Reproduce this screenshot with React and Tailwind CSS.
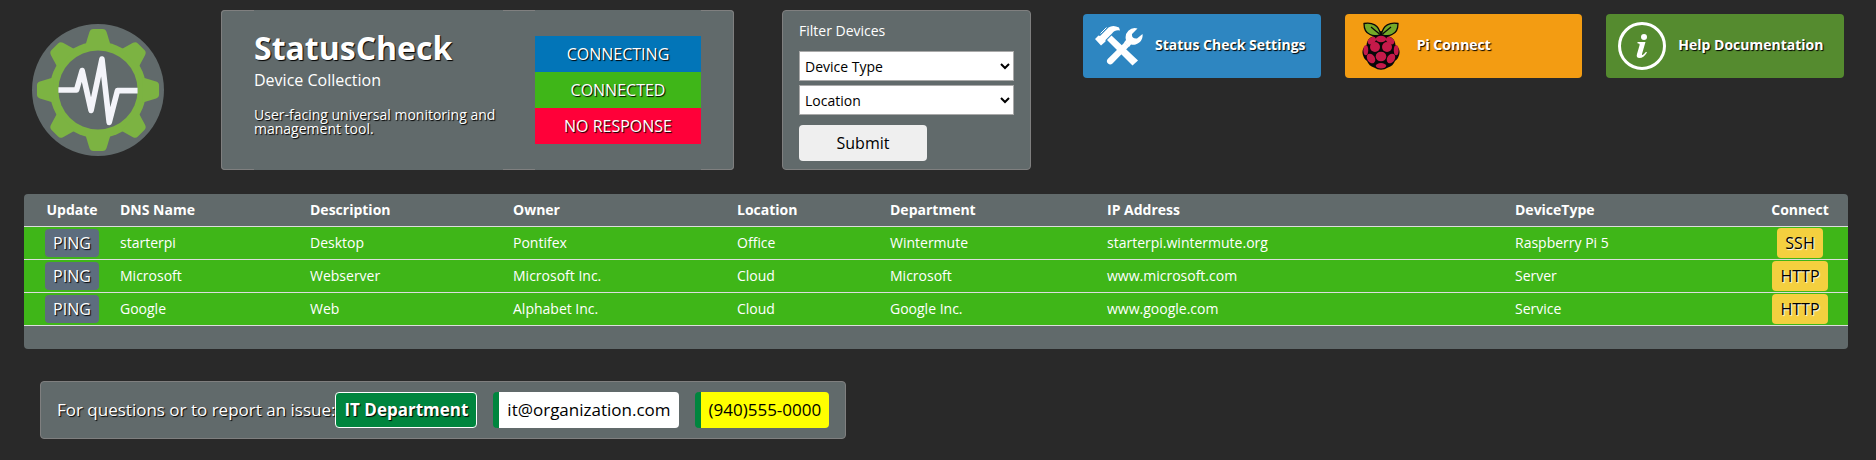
const devices = [
  { dns: 'starterpi', desc: 'Desktop', owner: 'Pontifex', loc: 'Office', dept: 'Wintermute', ip: 'starterpi.wintermute.org', type: 'Raspberry Pi 5', connect: 'SSH' },
  { dns: 'Microsoft', desc: 'Webserver', owner: 'Microsoft Inc.', loc: 'Cloud', dept: 'Microsoft', ip: 'www.microsoft.com', type: 'Server', connect: 'HTTP' },
  { dns: 'Google', desc: 'Web', owner: 'Alphabet Inc.', loc: 'Cloud', dept: 'Google Inc.', ip: 'www.google.com', type: 'Service', connect: 'HTTP' },
];

const toothAngles = [0, 45, 90, 135, 180, 225, 270, 315];

function Logo() {
  return (
    <svg viewBox="0 0 200 200" className="size-[132px] shrink-0" role="img" aria-label="StatusCheck logo">
      <circle cx="100" cy="100" r="100" fill="#616a6b" />
      <g fill="#7cb342">
        <circle cx="100" cy="100" r="73" />
        {toothAngles.map((angle) => (
          <path
            key={angle}
            transform={`rotate(${angle} 100 100)`}
            d="M81 32 L87 12 Q88.500 7.500 93 7.500 H107 Q111.500 7.500 113 12 L119 32 Z"
          />
        ))}
      </g>
      <circle cx="100" cy="100" r="60" fill="#616a6b" />
      <path
        d="M40 100 H67.500 L76 70.500 L89.500 131 L106 53 L117 149 L129.500 101 H160"
        fill="none"
        stroke="#f3f4f9"
        strokeWidth="8.500"
        strokeLinejoin="round"
      />
    </svg>
  );
}

function ToolsIcon() {
  return (
    <svg viewBox="0 0 48 48" className="size-12 shrink-0" fill="#fff" aria-hidden="true">
      <path d="M0 17 L3.500 13.500 L5 14 L13.500 5.500 Q18 2.500 24 5.500 L25 8.500 Q20 7.500 17 11.500 L15 13.500 L10.500 18 L10.500 19.500 L6 23.500 Z" />
      <path d="M5.500 11.500 L11.500 5.500" stroke="#fff" strokeWidth="1" />
      <path d="M12 18 L16.500 13.500 L43 38.500 L37.500 43.500 Z" />
      <path d="M29.500 20.500 L34 24.500 L17.500 41.500 A3.300 3.300 0 0 1 12.700 37 Z" />
      <path d="M42.500 6.500 A9.300 9.300 0 0 0 31 18 L29 20.500 L34 25 L36 22.500 A9.300 9.300 0 0 0 47.500 12 L42 16.500 Q36.500 17 37 12 Z" />
    </svg>
  );
}

function RaspberryIcon() {
  return (
    <svg viewBox="0 0 48 48" className="size-12 shrink-0" aria-hidden="true">
      <path
        d="M24 9 Q29 10 31 14 Q38 16 38.500 23 Q43 26 42.500 31 Q42 36 38 39 Q36 44 31 45.500 Q24 50 17 45.500 Q12 44 10 39 Q6 36 5.500 31 Q5 26 9.500 23 Q10 16 17 14 Q19 10 24 9 Z"
        fill="#080808"
      />
      <g fill="#75a928" stroke="#080808" strokeWidth="1.300" strokeLinejoin="round">
        <path d="M23.500 12.500 C22 3 15 0 7 1.500 C7 7 9 11 13 12.500 Q17 15 23.500 12.500 Z" />
        <path d="M24.500 12.500 C26 3 33 0 41 1.500 C41 7 39 11 35 12.500 Q31 15 24.500 12.500 Z" />
        <path d="M14 5 L22.500 12 M34 5 L25.500 12" fill="none" />
      </g>
      <g fill="#c51a4a">
        <ellipse cx="24" cy="17" rx="5.200" ry="3.200" />
        <ellipse cx="14.800" cy="18.600" rx="4.600" ry="3" transform="rotate(-35 14.800 18.600)" />
        <ellipse cx="33.200" cy="18.600" rx="4.600" ry="3" transform="rotate(35 33.200 18.600)" />
        <ellipse cx="18" cy="25" rx="5" ry="5" />
        <ellipse cx="30" cy="25" rx="5" ry="5" />
        <ellipse cx="8.800" cy="28.300" rx="2.400" ry="5" />
        <ellipse cx="39.200" cy="28.300" rx="2.400" ry="5" />
        <ellipse cx="24" cy="34.500" rx="5.300" ry="4.800" />
        <ellipse cx="14" cy="36.500" rx="3.800" ry="5.200" transform="rotate(-32 14 36.500)" />
        <ellipse cx="34" cy="36.500" rx="3.800" ry="5.200" transform="rotate(32 34 36.500)" />
        <ellipse cx="24" cy="43.800" rx="5.200" ry="2.700" />
      </g>
    </svg>
  );
}

function InfoIcon() {
  return (
    <svg viewBox="0 0 48 48" className="size-12 shrink-0" aria-hidden="true">
      <circle cx="24" cy="24" r="22.500" fill="none" stroke="#fff" strokeWidth="3" />
      <circle cx="26" cy="15" r="3" fill="#fff" />
      <path
        d="M19.500 20 H27.500 L24 32 Q23.700 33.500 25 32.800 Q26.500 31.800 28 29.800 L29 30.500 Q25.500 36 21.500 36 Q17.800 36 19 32 L21.700 22.800 Q22 21.300 19.500 21.300 Z"
        fill="#fff"
      />
    </svg>
  );
}

const shadowDark = '[text-shadow:1px_1px_1px_#000]';

const links = [
  { label: 'Status Check Settings', Icon: ToolsIcon, bg: 'bg-[#2e86c1]' },
  { label: 'Pi Connect', Icon: RaspberryIcon, bg: 'bg-[#f39c12]' },
  { label: 'Help Documentation', Icon: InfoIcon, bg: 'bg-[#558b2f]' },
];

const headings = [
  ['DNS Name', 'w-[190px]'],
  ['Description', 'w-[203px]'],
  ['Owner', 'w-[224px]'],
  ['Location', 'w-[153px]'],
  ['Department', 'w-[217px]'],
  ['IP Address', ''],
  ['DeviceType', 'w-[237px]'],
];

export default function App() {
  return (
    <div className="min-h-screen bg-[#292929] pt-[10px] pb-5 font-['Open_Sans','Noto_Sans',sans-serif] text-white">
      <header className="flex items-start pr-8 pl-8">
        <div className="flex h-40 items-center">
          <Logo />
        </div>

        <section className="ml-[57px] flex h-40 w-[513px] gap-8 rounded bg-[#616a6b] px-[33px] shadow-[inset_0_0_0_1px_#7f7f7f]">
          <div className="h-full flex-1 bg-[#616a6b] pt-[18px]">
            <h1 className={`text-[32px] leading-10 font-bold ${shadowDark}`}>StatusCheck</h1>
            <h2 className="text-base leading-6">Device Collection</h2>
            <p className={`mt-4 text-sm leading-[14px] ${shadowDark}`}>
              User-facing universal monitoring and management tool.
            </p>
          </div>
          <ul className={`flex h-full w-[166px] flex-col justify-center bg-[#616a6b] text-center text-base leading-9 ${shadowDark}`}>
            <li className="bg-[#0275b8]">CONNECTING</li>
            <li className="bg-[#3fb618]">CONNECTED</li>
            <li className="bg-[#ff0039]">NO RESPONSE</li>
          </ul>
        </section>

        <form className="ml-12 flex h-40 w-[249px] flex-col rounded border border-[#7f7f7f] bg-[#616a6b] px-4 pt-[10px] text-sm" onSubmit={(e) => e.preventDefault()}>
          <p className="mb-[10px] leading-5">Filter Devices</p>
          <select aria-label="Device Type" className="mb-1 h-[30px] border border-[#a9a9a9] bg-white px-px text-black">
            <option>Device Type</option>
          </select>
          <select aria-label="Location" className="mb-[10px] h-[30px] border border-[#a9a9a9] bg-white px-px text-black">
            <option>Location</option>
          </select>
          <button type="submit" className="h-9 w-32 rounded bg-[#efefef] text-base text-black">Submit</button>
        </form>

        <nav className="mt-1 ml-[52px] grid flex-1 grid-cols-3 gap-6">
          {links.map(({ label, Icon, bg }) => (
            <a key={label} href="#" className={`flex h-16 items-center gap-3 rounded px-3 text-sm font-bold ${bg} ${shadowDark}`}>
              <Icon />
              <span className="pb-0.5">{label}</span>
            </a>
          ))}
        </nav>
      </header>

      <main className="mt-6 mr-7 ml-6 rounded bg-[#616a6b] pb-[23px]">
        <table className="w-full table-fixed border-separate border-spacing-0 text-left text-sm leading-5">
          <thead>
            <tr className="h-[33px] *:border-b *:border-[#ddd] *:p-0 *:font-bold">
              <th className="w-24 text-center">Update</th>
              {headings.map(([name, width]) => (
                <th key={name} className={width}>{name}</th>
              ))}
              <th className="w-24 text-center">Connect</th>
            </tr>
          </thead>
          <tbody>
            {devices.map((d) => (
              <tr key={d.dns} className="h-[33px] bg-[#3fb618] *:border-b *:border-[#ddd] *:p-0">
                <td className="text-center">
                  <button type="button" className={`h-7 rounded bg-[#5d6d7e] px-2 align-middle text-base ${shadowDark}`}>PING</button>
                </td>
                <td>{d.dns}</td>
                <td>{d.desc}</td>
                <td>{d.owner}</td>
                <td>{d.loc}</td>
                <td>{d.dept}</td>
                <td>{d.ip}</td>
                <td>{d.type}</td>
                <td className="text-center">
                  <button type="button" className="h-[30px] rounded bg-[#f4d03f] px-2 align-middle text-base text-black [text-shadow:1px_1px_1px_#fff]">{d.connect}</button>
                </td>
              </tr>
            ))}
          </tbody>
        </table>
      </main>

      <footer className="mt-8 ml-10 flex w-fit items-center rounded border border-[#7f7f7f] bg-[#616a6b] px-4 py-[10px] text-[17px] leading-9">
        <span className={shadowDark}>For questions or to report an issue:</span>
        <strong className={`mr-4 h-9 rounded border border-white bg-[#00853e] px-2 leading-[34px] font-bold ${shadowDark}`}>IT Department</strong>
        <a href="mailto:it@organization.com" className="mr-4 rounded border-l-[6px] border-[#00853e] bg-white px-2 text-black">it@organization.com</a>
        <a href="tel:9405550000" className="rounded border-l-[6px] border-[#00853e] bg-[#ff0] px-2 text-black">(940)555-0000</a>
      </footer>
    </div>
  );
}
